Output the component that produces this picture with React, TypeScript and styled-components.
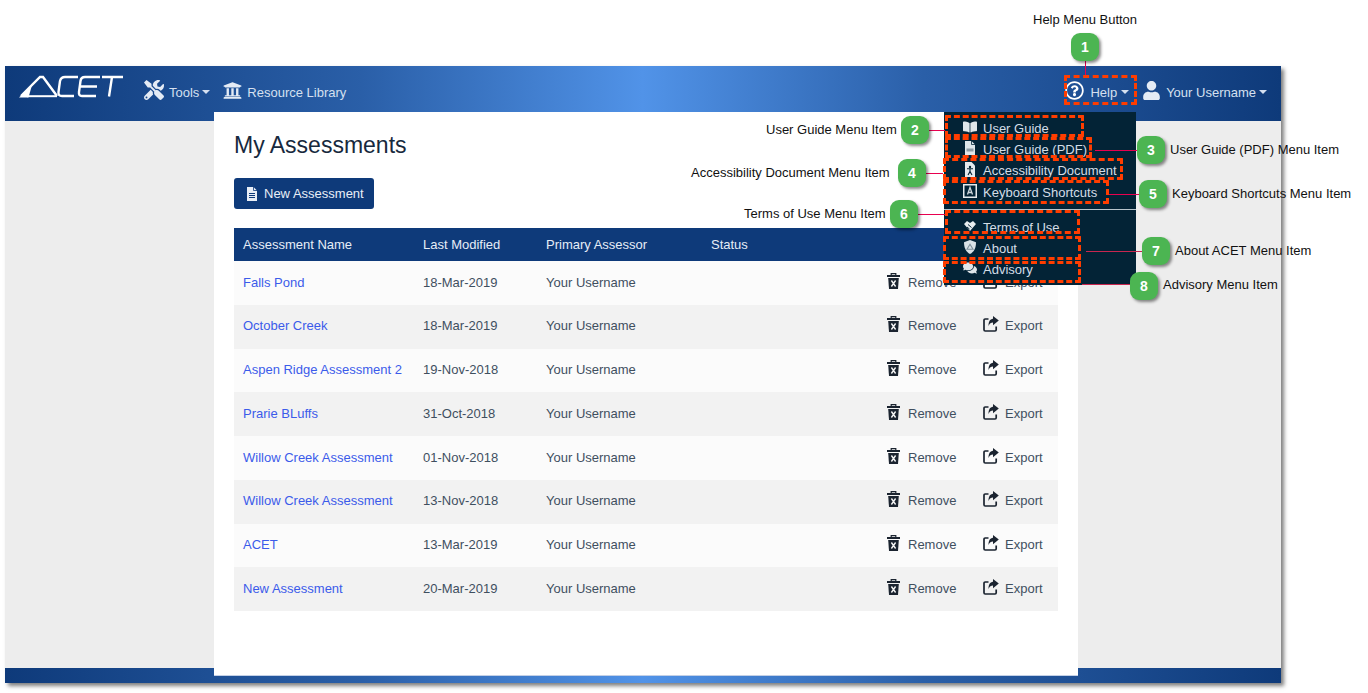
import { ReactNode } from "react";
import styled, { createGlobalStyle } from "styled-components";
import {
  FaBookOpen,
  FaComments,
  FaRegQuestionCircle,
  FaTools,
  FaUniversity,
  FaUser,
} from "react-icons/fa";

const GlobalStyle = createGlobalStyle`
  html, body {
    margin: 0;
    background: #fff;
    font-family: "Liberation Sans", Arial, sans-serif;
  }
`;

const BAR_GRADIENT =
  "linear-gradient(90deg, #0e3a7a 0%, #2a5fa8 28%, #5193e8 50%, #2a5fa8 72%, #0e3a7a 100%)";

/* ---------- page frame ---------- */

const Canvas = styled.div`
  position: relative;
  width: 1368px;
  height: 693px;
  padding: 66px 87px 10px 5px;
  box-sizing: border-box;
  overflow: hidden;
`;

const Window = styled.div`
  position: relative;
  display: flex;
  flex-direction: column;
  height: 100%;
  box-shadow: 3px 3px 4px rgba(0, 0, 0, 0.5);
`;

const Header = styled.header`
  display: flex;
  align-items: center;
  height: 55px;
  padding: 0 14px 3px;
  box-sizing: border-box;
  background: ${BAR_GRADIENT};
  color: #d5e0f0;
  font-size: 13px;
`;

const Logo = styled.svg`
  width: 105px;
  height: 23px;
  margin: -11px 20px 0 0;
  flex: none;
`;

const NavItem = styled.div<{ $gap?: number; $end?: boolean }>`
  display: flex;
  align-items: center;
  gap: ${(p) => p.$gap ?? 5}px;
  margin-left: ${(p) => (p.$end ? "auto" : "0")};
  padding-right: 13px;
  white-space: nowrap;
  &:last-child {
    padding-right: 0;
  }
  svg {
    flex: none;
    margin-top: -4px;
  }
`;

const Caret = styled.span`
  width: 0;
  height: 0;
  margin-left: -2px;
  border-top: 4px solid currentColor;
  border-left: 4px solid transparent;
  border-right: 4px solid transparent;
`;

const Body = styled.div`
  flex: 1;
  display: flex;
  background: #ededed;
  min-height: 0;
`;

const Panel = styled.main`
  position: relative;
  z-index: 1;
  width: 864px;
  margin: -9px 0 -7px 209px;
  padding: 20px 20px 0;
  box-sizing: border-box;
  background: #fff;
  box-shadow: 0 1px 0 #c3d0e6;
`;

const Footer = styled.footer`
  height: 15px;
  flex: none;
  background: ${BAR_GRADIENT};
`;

/* ---------- panel content ---------- */

const Title = styled.h1`
  margin: 0 0 19px;
  font-size: 23px;
  line-height: 27px;
  font-weight: 400;
  color: #17293d;
`;

const NewButton = styled.button`
  display: flex;
  align-items: center;
  gap: 5px;
  width: 140px;
  height: 31px;
  padding: 0 0 0 11px;
  margin-bottom: 19px;
  border: none;
  border-radius: 3px;
  background: #0e3a7a;
  color: #e8eef7;
  font: 13px "Liberation Sans", Arial, sans-serif;
`;

const COLUMNS = "180px 123px 165px 175px 97px 1fr";

const TableHead = styled.div`
  display: grid;
  grid-template-columns: ${COLUMNS};
  align-items: center;
  height: 33px;
  padding: 0 0 1px 9px;
  box-sizing: border-box;
  background: #0e3a7a;
  color: #e6edf7;
  font-size: 13px;
`;

const Row = styled.div<{ $striped: boolean }>`
  display: grid;
  grid-template-columns: ${COLUMNS};
  align-items: center;
  height: 43.75px;
  padding: 0 0 1.5px 9px;
  box-sizing: border-box;
  background: ${(p) => (p.$striped ? "#f2f2f2" : "#fbfbfb")};
  color: #3f4f5f;
  font-size: 13px;
`;

const NameLink = styled.a`
  color: #3b5bea;
  white-space: nowrap;
`;

const RowAction = styled.span<{ $gap: number }>`
  display: flex;
  align-items: center;
  gap: ${(p) => p.$gap}px;
  svg {
    flex: none;
    margin-top: -3px;
  }
`;

/* ---------- help menu ---------- */

const HelpMenu = styled.nav`
  position: absolute;
  z-index: 2;
  top: 46px;
  left: 939px;
  width: 192px;
  height: 173px;
  padding: 5.5px 0 4px;
  box-sizing: border-box;
  background: #032336;
  color: #d3dde6;
  font-size: 13px;
`;

const MenuItem = styled.div`
  display: flex;
  align-items: center;
  gap: 6px;
  height: 21.3px;
  padding-left: 19px;
  svg {
    flex: none;
    margin-top: -3px;
  }
`;

const MenuDivider = styled.hr`
  margin: 6px 0 7px;
  border: none;
  border-top: 1px solid #b8c4cc;
`;

/* ---------- annotations over the screenshot ---------- */

const Highlight = styled.div<{ $x: number; $y: number; $w: number; $h: number }>`
  position: absolute;
  z-index: 4;
  left: ${(p) => p.$x}px;
  top: ${(p) => p.$y}px;
  width: ${(p) => p.$w}px;
  height: ${(p) => p.$h}px;
  box-sizing: border-box;
  border: 3px dashed #ff3d00;
  border-radius: 1px;
`;

const Leader = styled.div<{ $x: number; $y: number; $w: number; $h: number; $soft?: boolean }>`
  position: absolute;
  z-index: 3;
  left: ${(p) => p.$x}px;
  top: ${(p) => p.$y}px;
  width: ${(p) => p.$w}px;
  height: ${(p) => p.$h}px;
  background: ${(p) => (p.$soft ? "#c8264f" : "#e8004f")};
`;

const Badge = styled.div<{ $x: number; $y: number }>`
  position: absolute;
  z-index: 5;
  left: ${(p) => p.$x - 14}px;
  top: ${(p) => p.$y - 14}px;
  width: 28px;
  height: 28px;
  display: flex;
  align-items: center;
  justify-content: center;
  border-radius: 9px;
  background: #4cb552;
  box-shadow: 2px 2px 3px rgba(0, 0, 0, 0.45);
  color: #fff;
  font-size: 14px;
  font-weight: 700;
`;

const Note = styled.div<{ $x: number; $y: number }>`
  position: absolute;
  z-index: 5;
  left: ${(p) => p.$x}px;
  top: ${(p) => p.$y - 8}px;
  line-height: 16px;
  font-size: 13px;
  color: #111;
  white-space: nowrap;
`;

/* ---------- drawn icons ---------- */

const AcetLogo = () => (
  <Logo viewBox="0 0 105 23">
    <g fill="none" stroke="#fff" strokeWidth="2.4">
      <path d="M2 21 L21 2 L24 2 L38 21" />
      <path d="M8 21.2 L38 21.2" strokeWidth="2" />
      <path d="M59 2 L46 2 Q42 2 41 6 L39.5 17 Q39 21 43 21 L55 21" />
      <path d="M81 2 L66 2 Q62 2 61.5 6 L60 17 Q59.5 21 63 21 L77 21 M61 11.5 L78 11.5" />
      <path d="M83 2 L104 2 M93 2 L90 21.5" />
    </g>
    <path d="M0 22.4 L13 10 L9.5 22.4 Z" fill="#fff" />
  </Logo>
);

const DocIcon = ({ ink = "#fff", band = "#0e3a7a", size = 14 }) => (
  <svg width={size} height={size} viewBox="0 0 14 14">
    <path d="M2 0 H8.5 L12 3.5 V14 H2 Z" fill={ink} />
    <path d="M8.5 0 V3.5 H12" fill="none" stroke={band} strokeWidth="0.8" />
    <path d="M4 6.5 H10 M4 8.5 H10 M4 10.5 H10" stroke={band} strokeWidth="1.2" />
  </svg>
);

const PdfDocIcon = () => (
  <svg width="14" height="14" viewBox="0 0 14 14">
    <path d="M2 0 H8.5 L12 3.5 V14 H2 Z" fill="#dfe6ea" />
    <path d="M8.5 0 V3.5 H12" fill="none" stroke="#032336" strokeWidth="0.8" />
    <rect x="3.5" y="7.5" width="7" height="3" fill="#8d9ba5" />
  </svg>
);

const AccessDocIcon = () => (
  <svg width="14" height="15" viewBox="0 0 14 15">
    <path d="M2 0 H8.5 L12 3.5 V15 H2 Z" fill="#e4eaee" />
    <circle cx="7" cy="5" r="1.2" fill="#032336" />
    <path d="M4 6.8 H10 M7 6.8 V9.6 M7 9.6 L5 13 M7 9.6 L9 13" stroke="#032336" strokeWidth="1.1" fill="none" />
  </svg>
);

const KeyboardIcon = () => (
  <svg width="14" height="14" viewBox="0 0 14 14">
    <rect x="0.75" y="0.75" width="12.5" height="12.5" fill="#032336" stroke="#e4eaee" strokeWidth="1.5" />
    <path d="M4.5 10.5 L7 3.5 L9.5 10.5 M5.3 8.5 H8.7" fill="none" stroke="#cfd8de" strokeWidth="1.3" />
  </svg>
);

const HandshakeIcon = () => (
  <svg width="14" height="14" viewBox="0 0 14 14">
    <path d="M1 5 L4 2 L7 4 L10 2 L13 5 L7 12 Z" fill="#e8edf0" />
    <path d="M5 5.5 L8.5 8.5 M4 8 L6.5 10" stroke="#032336" strokeWidth="1" fill="none" />
  </svg>
);

const ShieldIcon = () => (
  <svg width="14" height="14" viewBox="0 0 14 14">
    <path d="M7 0 L13 2.2 C13 8 11 11.8 7 14 C3 11.8 1 8 1 2.2 Z" fill="#d9e1e6" />
    <path d="M7 4.2 L10 9.2 H4 Z" fill="none" stroke="#7d8f9a" strokeWidth="1.1" />
  </svg>
);

const TrashIcon = () => (
  <svg width="15" height="16" viewBox="0 0 15 16">
    <path d="M5.2 2 V0.6 H9.8 V2" fill="none" stroke="#1b2430" strokeWidth="1.2" />
    <path d="M1 2 H14 V4 H1 Z" fill="#1b2430" />
    <path d="M2.2 5 H12.8 L12 16 H3 Z" fill="#1b2430" />
    <path d="M5.4 7.5 L9.6 13.5 M9.6 7.5 L5.4 13.5" stroke="#f4f4f4" strokeWidth="1.4" />
  </svg>
);

const ExportIcon = () => (
  <svg width="16" height="16" viewBox="0 0 16 16">
    <path d="M5.5 3 H2.2 Q1 3 1 4.2 V13.8 Q1 15 2.2 15 H12 Q13.2 15 13.2 13.8 V10.5" fill="none" stroke="#1b2430" strokeWidth="1.7" />
    <path d="M10 0 L15.8 4.6 L10 9.2 V6.6 C8 6.6 6.6 7.6 5.6 10 C5.4 5.6 7 3 10 2.7 Z" fill="#1b2430" />
  </svg>
);

/* ---------- data ---------- */

const assessments: [string, string][] = [
  ["Falls Pond", "18-Mar-2019"],
  ["October Creek", "18-Mar-2019"],
  ["Aspen Ridge Assessment 2", "19-Nov-2018"],
  ["Prarie BLuffs", "31-Oct-2018"],
  ["Willow Creek Assessment", "01-Nov-2018"],
  ["Willow Creek Assessment", "13-Nov-2018"],
  ["ACET", "13-Mar-2019"],
  ["New Assessment", "20-Mar-2019"],
];

const topMenu: [ReactNode, string][] = [
  [<FaBookOpen size={14} color="#dfe6ea" />, "User Guide"],
  [<PdfDocIcon />, "User Guide (PDF)"],
  [<AccessDocIcon />, "Accessibility Document"],
  [<KeyboardIcon />, "Keyboard Shortcuts"],
];

const bottomMenu: [ReactNode, string][] = [
  [<HandshakeIcon />, "Terms of Use"],
  [<ShieldIcon />, "About"],
  [<FaComments size={14} color="#dfe6ea" />, "Advisory"],
];

const highlights = [
  { x: 1064, y: 75, w: 73, h: 30 },
  { x: 945, y: 115, w: 139, h: 22 },
  { x: 945, y: 137, w: 147, h: 21 },
  { x: 943, y: 158, w: 180, h: 22 },
  { x: 943, y: 180, w: 166, h: 24 },
  { x: 945, y: 210, w: 135, h: 24 },
  { x: 943, y: 236, w: 138, h: 24 },
  { x: 943, y: 261, w: 138, h: 22 },
];

const leaders = [
  { x: 1085, y: 60, w: 1, h: 15 },
  { x: 929, y: 130, w: 16, h: 1 },
  { x: 1095, y: 150, w: 43, h: 1 },
  { x: 925, y: 173, w: 18, h: 1 },
  { x: 1109, y: 194, w: 31, h: 1 },
  { x: 917, y: 214, w: 28, h: 1 },
  { x: 1086, y: 251, w: 57, h: 1, soft: true },
  { x: 1082, y: 284, w: 49, h: 1, soft: true },
];

const badges = [
  { n: 1, x: 1085, y: 47 },
  { n: 2, x: 915, y: 130 },
  { n: 3, x: 1151, y: 150 },
  { n: 4, x: 912, y: 173 },
  { n: 5, x: 1153, y: 194 },
  { n: 6, x: 904, y: 214 },
  { n: 7, x: 1156, y: 251 },
  { n: 8, x: 1144, y: 286 },
];

const notes = [
  { text: "Help Menu Button", x: 1033, y: 20 },
  { text: "User Guide Menu Item", x: 766, y: 130 },
  { text: "User Guide (PDF) Menu Item", x: 1170, y: 150 },
  { text: "Accessibility Document Menu Item", x: 691, y: 173 },
  { text: "Keyboard Shortcuts Menu Item", x: 1172, y: 194 },
  { text: "Terms of Use Menu Item", x: 744, y: 214 },
  { text: "About ACET Menu Item", x: 1175, y: 251 },
  { text: "Advisory Menu Item", x: 1163, y: 285 },
];

export default function App() {
  return (
    <Canvas>
      <GlobalStyle />
      <Window>
        <Header>
          <AcetLogo />
          <NavItem>
            <FaTools size={20} color="#e4ebf5" />
            Tools
            <Caret />
          </NavItem>
          <NavItem>
            <FaUniversity size={19} color="#e4ebf5" />
            Resource Library
          </NavItem>
          <NavItem $end $gap={6}>
            <FaRegQuestionCircle size={19} color="#fff" />
            Help
            <Caret />
          </NavItem>
          <NavItem $gap={5}>
            <FaUser size={19} color="#e4ebf5" />
            Your Username
            <Caret />
          </NavItem>
        </Header>
        <Body>
          <Panel>
            <Title>My Assessments</Title>
            <NewButton>
              <DocIcon ink="#e8eef7" />
              New Assessment
            </NewButton>
            <TableHead>
              <span>Assessment Name</span>
              <span>Last Modified</span>
              <span>Primary Assessor</span>
              <span>Status</span>
            </TableHead>
            {assessments.map(([name, date], i) => (
              <Row key={name + date} $striped={i % 2 === 1}>
                <NameLink>{name}</NameLink>
                <span>{date}</span>
                <span>Your Username</span>
                <span />
                <RowAction $gap={7}>
                  <TrashIcon />
                  Remove
                </RowAction>
                <RowAction $gap={6}>
                  <ExportIcon />
                  Export
                </RowAction>
              </Row>
            ))}
          </Panel>
        </Body>
        <Footer />
        <HelpMenu>
          {topMenu.map(([icon, label]) => (
            <MenuItem key={label}>
              {icon}
              {label}
            </MenuItem>
          ))}
          <MenuDivider />
          {bottomMenu.map(([icon, label]) => (
            <MenuItem key={label}>
              {icon}
              {label}
            </MenuItem>
          ))}
        </HelpMenu>
      </Window>

      {leaders.map((l) => (
        <Leader key={`${l.x}-${l.y}`} $x={l.x} $y={l.y} $w={l.w} $h={l.h} $soft={l.soft} />
      ))}
      {highlights.map((h) => (
        <Highlight key={h.y} $x={h.x} $y={h.y} $w={h.w} $h={h.h} />
      ))}
      {badges.map((b) => (
        <Badge key={b.n} $x={b.x} $y={b.y}>
          {b.n}
        </Badge>
      ))}
      {notes.map((n) => (
        <Note key={n.text} $x={n.x} $y={n.y}>
          {n.text}
        </Note>
      ))}
    </Canvas>
  );
}
